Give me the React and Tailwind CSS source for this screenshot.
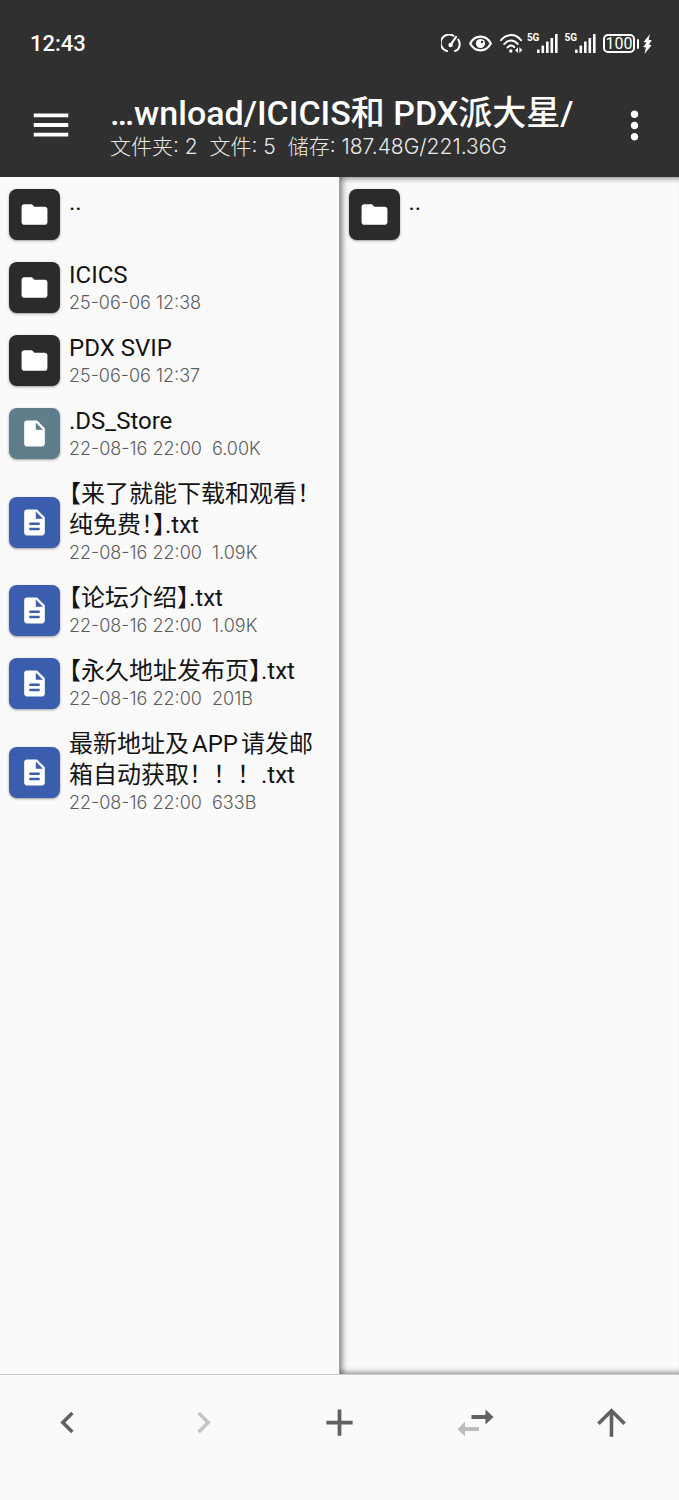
import {
  MdAdd,
  MdArrowUpward,
  MdChevronLeft,
  MdChevronRight,
  MdDescription,
  MdFolder,
  MdInsertDriveFile,
  MdMenu,
  MdMoreVert,
} from "react-icons/md";

const leftFiles = [
  { type: "folder", name: ".." },
  { type: "folder", name: "ICICS", date: "25-06-06 12:38" },
  { type: "folder", name: "PDX SVIP", date: "25-06-06 12:37" },
  { type: "unknown", name: ".DS_Store", date: "22-08-16 22:00", size: "6.00K" },
  { type: "text", name: "【来了就能下载和观看！纯免费！】.txt", date: "22-08-16 22:00", size: "1.09K" },
  { type: "text", name: "【论坛介绍】.txt", date: "22-08-16 22:00", size: "1.09K" },
  { type: "text", name: "【永久地址发布页】.txt", date: "22-08-16 22:00", size: "201B" },
  { type: "text", name: "最新地址及APP请发邮箱自动获取！！！.txt", date: "22-08-16 22:00", size: "633B" },
];

const rightFiles = [{ type: "folder", name: ".." }];

const fileTypes = {
  folder: { Icon: MdFolder, color: "bg-[#2b2b2b]" },
  unknown: { Icon: MdInsertDriveFile, color: "bg-[#607d8b]" },
  text: { Icon: MdDescription, color: "bg-[#3a5dae]" },
};

function SignalIcon() {
  return (
    <div className="flex items-start">
      <span className="-mr-[2px] -mt-px font-['Roboto',sans-serif] text-[10px] leading-[10px] font-bold">5G</span>
      <svg width="21" height="19" viewBox="0 0 21 19" fill="currentColor">
        <rect x="0" y="15.5" width="2.6" height="3.5" rx="0.5" />
        <rect x="4.5" y="11.5" width="2.6" height="7.5" rx="0.5" />
        <rect x="9" y="7.5" width="2.6" height="11.5" rx="0.5" />
        <rect x="13.5" y="4" width="2.6" height="15" rx="0.5" />
        <rect x="18" y="0" width="2.6" height="19" rx="0.5" />
      </svg>
    </div>
  );
}

function StatusBar() {
  return (
    <div className="flex h-[73px] items-center justify-between pt-[14px] pr-[27px] pl-[30px]">
      <span className="font-['Roboto','Noto_Sans_CJK_SC',sans-serif] text-[22px] leading-6 font-medium">12:43</span>
      <div className="flex items-center">
        {/* Speed gauge */}
        <svg className="mr-2" width="20" height="19" viewBox="0 0 20 19" fill="none" stroke="currentColor" strokeWidth="2" strokeLinecap="round">
          <path d="M6 17 L3.6 16 A8.2 8.2 0 0 1 12.5 1.8" />
          <path d="M17.2 5.5 A8.2 8.2 0 0 1 16.4 16 L14 17" />
          <path d="M9.5 11 L15 3" strokeWidth="2.2" />
          <circle cx="9.6" cy="11" r="1.2" fill="currentColor" />
        </svg>
        {/* Eye comfort */}
        <svg className="mr-2" width="23" height="17" viewBox="0 0 23 17">
          <path d="M1.2 8.5 C6 -0.6 17 -0.6 21.8 8.5 C17 17.6 6 17.6 1.2 8.5 Z" fill="none" stroke="currentColor" strokeWidth="2.2" strokeLinejoin="round" />
          <circle cx="11.5" cy="8.5" r="4.6" fill="currentColor" />
          <circle cx="13" cy="7" r="1.2" fill="#303030" />
        </svg>
        {/* Wi-Fi */}
        <svg className="mr-1" width="23" height="19" viewBox="0 0 23 19" fill="none" stroke="currentColor" strokeWidth="2" strokeLinecap="round">
          <path d="M1 6.2 C6.5 -0.6 15.5 -0.6 21 6.2" />
          <path d="M4.3 10 C8 5.2 14 5.2 17.7 10" />
          <path d="M7.6 13.4 C9.6 11 12.4 11 14.2 13" />
          <circle cx="10.8" cy="17" r="1.7" fill="currentColor" stroke="none" />
          <path d="M18 13.2 V19 L15 16.2 Z M19.4 19 V13.2 L22.4 16 Z" fill="currentColor" stroke="none" />
        </svg>
        <div className="flex gap-[6px]">
          <SignalIcon />
          <SignalIcon />
        </div>
        {/* Battery */}
        <div className="ml-[7px] flex h-[19px] w-8 items-center justify-center rounded-[5px] border-2 border-current font-['Roboto',sans-serif] text-[16px] leading-4">
          100
        </div>
        <div className="ml-[2px] h-[10px] w-[2px] rounded-sm bg-current" />
        <svg className="ml-1" width="9" height="20" viewBox="0 0 9 20" fill="currentColor">
          <path d="M7 0 L0.6 8 L3.6 8.6 L0.2 13 L3 13.6 L1.4 20 L8.6 11.2 L5.8 10.6 L9 6.4 L5.6 5.8 Z" />
        </svg>
      </div>
    </div>
  );
}

function FileRow({ file }) {
  const { Icon, color } = fileTypes[file.type];
  // Half-width punctuation keeps a leading bracket in line with the date below
  const punctuation = file.name.startsWith("【") ? "[font-feature-settings:'halt']" : "";

  return (
    <li>
      <button className="flex min-h-[73px] w-full items-center gap-[9px] pt-[10px] pr-2 pb-2 pl-[9px] text-left">
        <span className={`flex size-[51px] shrink-0 items-center justify-center rounded-lg text-white shadow-sm shadow-black/30 ${color}`}>
          <Icon size={31} />
        </span>
        <span className="flex min-w-0 flex-1 flex-col self-start">
          <span className={`text-[24px] leading-[31px] break-words text-[#141414] [text-autospace:normal] ${punctuation}`}>
            {file.name}
          </span>
          {file.date && (
            <span className="font-['Inter','Noto_Sans_CJK_SC',sans-serif] text-[18px] leading-6 font-light whitespace-pre text-[#5c5c5c]">
              {file.size ? `${file.date}  ${file.size}` : file.date}
            </span>
          )}
        </span>
      </button>
    </li>
  );
}

function SwapIcon() {
  return (
    <svg width="37" height="28" viewBox="0 0 37 28">
      <path d="M14.5 6 H28.5 V0.5 L36.5 8 L28.5 15.5 V10 H14.5 Z" fill="#616161" />
      <path d="M22 18 H8 V12.5 L0.5 20 L8 27.5 V22 H22 Z" fill="#bdbdbd" />
    </svg>
  );
}

export default function App() {
  return (
    <div className="flex min-h-screen flex-col bg-[#fafafa] font-['Roboto','Noto_Sans_CJK_SC',sans-serif]" lang="zh-CN">
      {/* Header */}
      <header className="bg-[#303030] text-white">
        <StatusBar />
        <div className="flex h-[104px] items-center pr-[22px] pl-7">
          <button aria-label="菜单" className="shrink-0">
            <MdMenu size={46} />
          </button>
          <div className="ml-9 min-w-0 flex-1 pt-1">
            <h1 className="truncate text-[34px] leading-10 font-medium">…wnload/ICICIS和 PDX派大星/</h1>
            <p className="truncate font-['Inter','Noto_Sans_CJK_SC',sans-serif] text-[21px] leading-7 font-light whitespace-pre text-[#e8e8e8]">
              文件夹: 2  文件: 5  储存: 187.48G/221.36G
            </p>
          </div>
          <button aria-label="更多" className="shrink-0">
            <MdMoreVert size={45} />
          </button>
        </div>
      </header>

      {/* Two panes */}
      <main className="grid flex-1 grid-cols-2">
        <ul className="border-r border-[#a0a0a0]">
          {leftFiles.map((file) => (
            <FileRow key={file.name} file={file} />
          ))}
        </ul>
        <ul className="shadow-[inset_8px_0_6px_-6px_#00000080,inset_0_7px_6px_-6px_#00000080,inset_0_-7px_6px_-6px_#00000080]">
          {rightFiles.map((file) => (
            <FileRow key={file.name} file={file} />
          ))}
        </ul>
      </main>

      {/* Bottom actions */}
      <nav className="flex h-[126px] border-t border-[#cccccc] pb-[30px] text-[#616161]">
        <button aria-label="后退" className="flex flex-1 items-center justify-center">
          <MdChevronLeft size={43} />
        </button>
        <button aria-label="前进" disabled className="flex flex-1 items-center justify-center text-[#c4c4c4]">
          <MdChevronRight size={43} />
        </button>
        <button aria-label="新建" className="flex flex-1 items-center justify-center">
          <MdAdd size={45} />
        </button>
        <button aria-label="同步" className="flex flex-1 items-center justify-center">
          <SwapIcon />
        </button>
        <button aria-label="上级目录" className="flex flex-1 items-center justify-center">
          <MdArrowUpward size={43} />
        </button>
      </nav>
    </div>
  );
}
